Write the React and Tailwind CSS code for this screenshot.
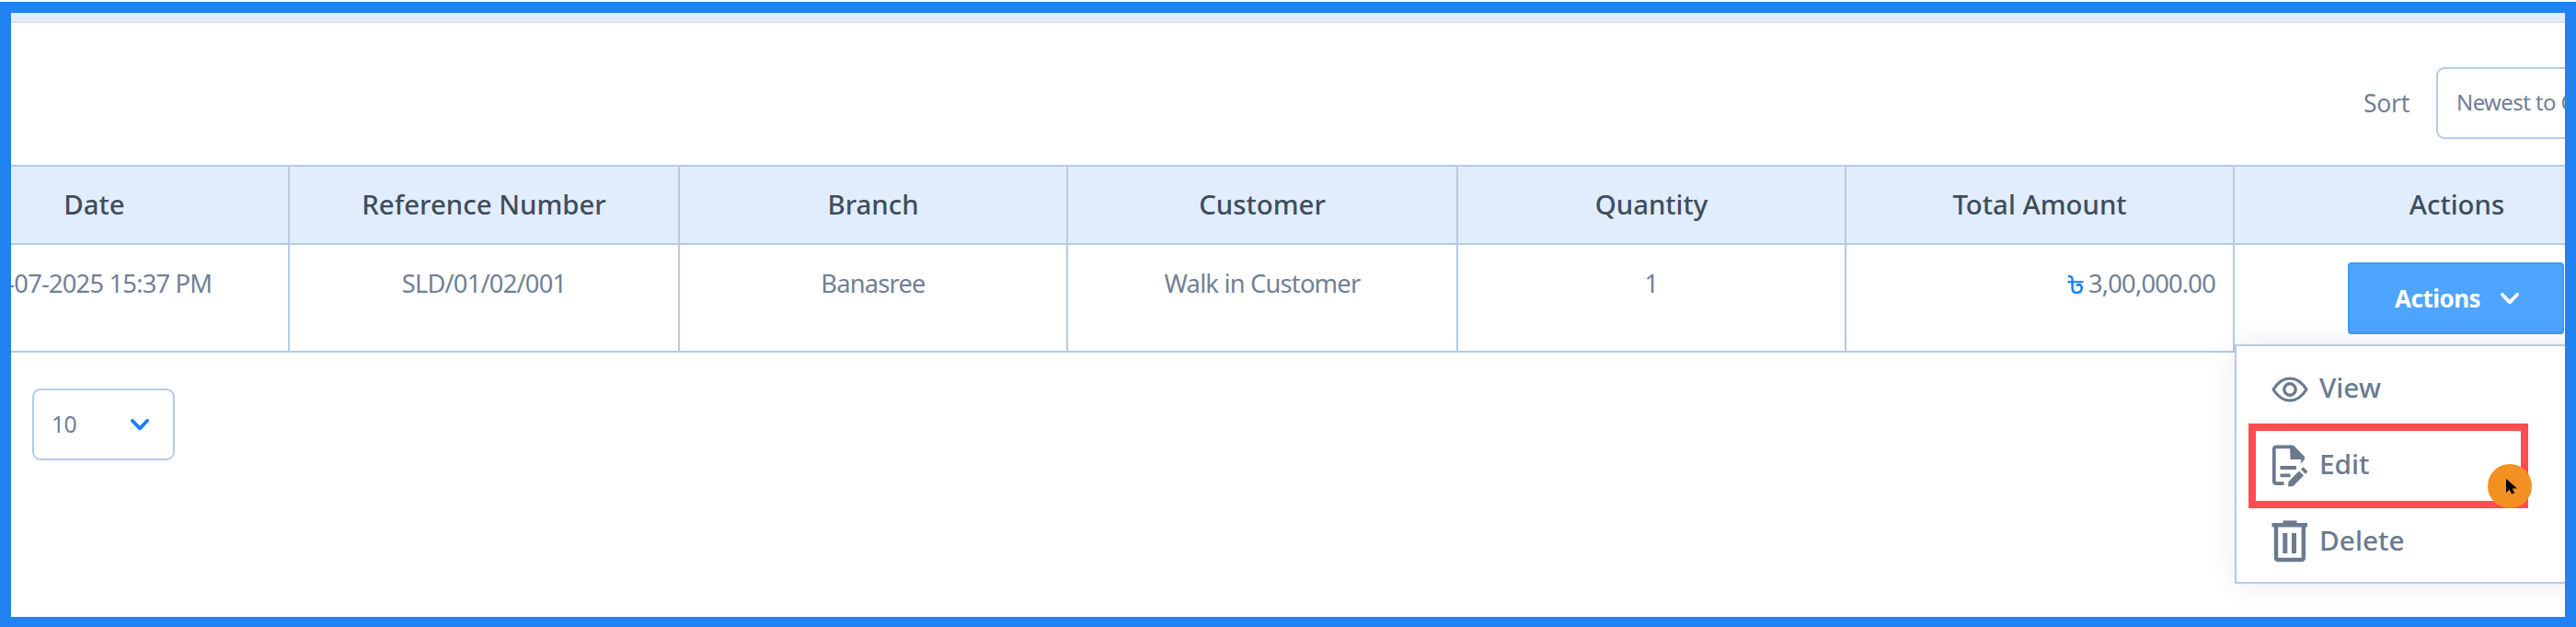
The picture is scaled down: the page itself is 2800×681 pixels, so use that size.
const COLUMNS = ['Date', 'Reference Number', 'Branch', 'Customer', 'Quantity', 'Total Amount', 'Actions']

const CELL = 'flex justify-center border-r-2 border-[#b3cbe6]'

// last column runs past the visible edge of the scrolled table
const GRID = 'grid grid-cols-[423px_424px_422px_424px_422px_422px_485px]'

export default function App() {
  return (
    <div className="h-[681px] w-[2800px] overflow-hidden bg-white pt-[2px] font-['Noto_Sans',sans-serif] text-[#718096]">
      <div className="relative h-[679px] overflow-hidden border-12 border-b-11 border-[#2182f1] bg-white">
        <div className="h-[11px] border-b border-[#dadcdf] bg-[#e1edfc]" />

        {/* ── Sort toolbar ── */}
        <div className="flex h-[154px] items-start pt-12 pl-[2557px]">
          <span className="w-[79px] shrink-0 pt-[21px] text-[26.6px] leading-[36px] tracking-[-0.3px]">Sort</span>
          <div className="flex h-[78px] w-[340px] shrink-0 items-center rounded-[9px] border-2 border-[#b5cce8] pb-[3px] pl-[20px] text-[24px] tracking-[-0.6px] whitespace-nowrap">
            Newest to Oldest
          </div>
        </div>

        {/* ── Table ── */}
        <div className="-ml-[120px] w-[3022px] border-y-2 border-[#b3cbe6]">
          <div className={`${GRID} h-[85px] border-b-2 border-[#b3cbe6] bg-[#e1edfc] text-[29.4px] leading-[83px] font-medium text-[#3f4d5c]`}>
            {COLUMNS.map(c => <div key={c} className={CELL}>{c}</div>)}
          </div>
          <div className={`${GRID} h-[115px] text-[27.3px] leading-[84px] tracking-[-0.8px]`}>
            <div className={`${CELL} pl-[3px] whitespace-nowrap`}>27-07-2025 15:37 PM</div>
            <div className={CELL}>SLD/01/02/001</div>
            <div className={CELL}>Banasree</div>
            <div className={CELL}>Walk in Customer</div>
            <div className={CELL}>1</div>
            <div className="flex justify-end border-r-2 border-[#b3cbe6] pr-[19px]">
              <TakaIcon />
              3,00,000.00
            </div>
            <div className="flex pt-[19px] pl-[123px]">
              <button className="flex h-[78px] w-[235px] items-center rounded-[4px] border-2 border-[#3b9aff] bg-[#4da5ff] pl-[49px] text-[26px] font-bold tracking-[-0.5px] text-white">
                Actions
                <Chevron className="ml-[22px]" />
              </button>
            </div>
          </div>
        </div>

        {/* ── Page size ── */}
        <div className="mt-[39px] ml-[23px] flex h-[78px] w-[155px] items-center justify-between rounded-[9px] border-2 border-[#b5cce8] pr-[26px] pb-[1px] pl-[19px] text-[24.8px] tracking-[-0.8px]">
          <span>10</span>
          <Chevron className="mt-[2px] text-[#1a7ffb]" />
        </div>

        {/* ── Row actions menu ── */}
        <div className="absolute top-[360px] left-[2417px] flex h-[260px] w-[450px] flex-col border-2 border-[#b3cbe6] bg-white pt-[5px] pl-[38px] text-[29.8px] font-medium text-[#6a7a90] shadow-[0_0_28px_rgba(0,0,0,0.09)]">
          <MenuItem icon={<EyeIcon />} label="View" />
          <MenuItem icon={<EditIcon />} label="Edit" />
          <MenuItem icon={<TrashIcon />} label="Delete" />
        </div>

        {/* Highlight + pointer */}
        <div className="absolute top-[446px] left-[2432px] h-[92px] w-[304px] border-8 border-[#ff4d51]" />
        <div className="absolute top-[490px] left-[2692px] size-12 rounded-full bg-[#f29121]">
          <svg viewBox="0 0 48 48" className="size-12">
            <path d="M20 16v15.2l3.6-3.4 2.6 5 3-1.6-2.4-4.6H32z" fill="#000" />
          </svg>
        </div>
      </div>
    </div>
  )
}

function MenuItem({ icon, label }) {
  return (
    <div className="flex h-[83px] items-center">
      <span className="mr-[12px] w-[40px]">{icon}</span>
      <span className="pb-[3px] leading-[40px]">{label}</span>
    </div>
  )
}

function Chevron({ className }) {
  return (
    <svg viewBox="0 0 20 13" className={`h-[13px] w-[20px] ${className}`} fill="none" stroke="currentColor" strokeWidth="3.8" strokeLinecap="round" strokeLinejoin="round">
      <path d="M2 2l8 8.4L18 2" />
    </svg>
  )
}

function TakaIcon() {
  return (
    <svg viewBox="0 0 18 22" className="mt-[32px] mr-[5px] h-[22px] w-[18px] text-[#2182f1]" fill="none" stroke="currentColor" strokeWidth="2.6">
      <path d="M1 2.200c3-.4 4.600.8 4.600 3.600v9c0 3.600 1.800 5.200 4.800 5.200 3.400 0 5.400-2.200 5.400-5.400 0-2.200-1.200-3.500-3.200-3.500-1.200 0-2 .5-2.300 1.700" />
      <path d="M.5 8.200h17" strokeWidth="2.200" />
    </svg>
  )
}

function EyeIcon() {
  return (
    <svg viewBox="0 0 40 28" className="h-[28px] w-[40px]" fill="none" stroke="currentColor" strokeWidth="3.2" strokeLinejoin="round">
      <path d="M2 14C7 6 13 2 20 2s13 4 18 12c-5 8-11 12-18 12S7 22 2 14z" />
      <circle cx="20" cy="14" r="6.2" strokeWidth="3.4" />
    </svg>
  )
}

function EditIcon() {
  return (
    <svg viewBox="0 0 40 46" className="h-[46px] w-[40px]" fill="none" stroke="currentColor" strokeWidth="3.8">
      <path d="M13.5 42.2H5.5c-1.8 0-2.7-1-2.7-2.6V5c0-1.8 1-2.7 2.7-2.7H22" />
      <path d="M20 .8h4L36 13v3l-4 4.5.2-4.5H20.5z" fill="currentColor" stroke="none" />
      <path d="M9.5 25H27M9.5 33.3h11" />
      <path d="M34.5 24.2l5 5-2.6 2.6-5-5zM30 28.5l5 5L23.5 45l-5.5.6.6-5.6z" fill="currentColor" stroke="none" />
    </svg>
  )
}

function TrashIcon() {
  return (
    <svg viewBox="0 0 40 46" className="-mt-[2px] h-[46px] w-[40px]" fill="none" stroke="currentColor">
      <path d="M.5 5.200h38.500" strokeWidth="4.400" />
      <path d="M12.500 2.200h15" strokeWidth="3.600" />
      <path d="M5 6v34.500c0 1.800 1 2.500 2.500 2.500h25c1.500 0 2.300-.8 2.300-2.500V6" strokeWidth="4.400" />
      <path d="M14.800 14v22M24.500 14v22" strokeWidth="5" />
    </svg>
  )
}
